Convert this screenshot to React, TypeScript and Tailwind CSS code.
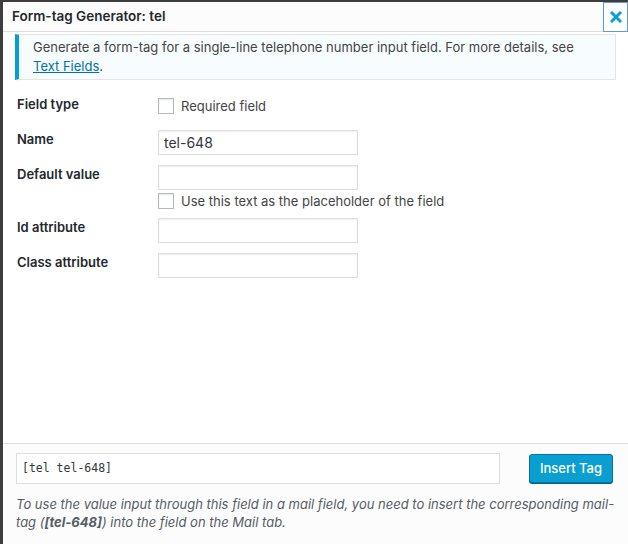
import { useState } from 'react'

function Checkbox({ label }: { label: string }) {
  return (
    <label className="flex items-center gap-[7px] h-4 text-[13px] text-[#444]">
      <span className="w-4 h-4 border border-[#b4b9be] bg-white shadow-[inset_0_1px_2px_rgba(0,0,0,0.1)]" />
      {label}
    </label>
  )
}

function Field({ value = '' }: { value?: string }) {
  return (
    <div className="w-[200px] h-[25px] border border-[#ddd] bg-white shadow-[inset_0_1px_2px_rgba(0,0,0,0.07)] px-[5px] flex items-center text-[14px] text-[#32373c]">
      {value}
    </div>
  )
}

export default function App() {
  const [tag] = useState('[tel tel-648]')

  return (
    <div className="w-[628px] h-[544px] bg-[#3d3d3d] pl-[3px] pt-[2px] overflow-hidden" style={{ fontFamily: 'Inter, "Noto Sans", sans-serif' }}>
      <div className="h-full bg-white flex flex-col">
        {/* header */}
        <div className="h-[30px] bg-[#fcfcfc] border-b border-[#ddd] flex items-center justify-between shrink-0">
          <h1 className="pl-[9px] text-[13.5px] font-semibold text-[#23282d]">Form-tag Generator: tel</h1>
          <button className="w-[25px] h-[30px] border border-[#5b9dd9] bg-white flex items-center justify-center text-[#0aa0d6]">
            <svg width="12" height="12" viewBox="0 0 12 12">
              <path d="M2 2 L10 10 M10 2 L2 10" stroke="currentColor" strokeWidth="3" strokeLinecap="square" />
            </svg>
          </button>
        </div>

        <div className="flex-1 px-[12px]">
          <div className="mt-[2px] bg-[#f7fcfe] border border-[#e5e5e5] border-l-4 border-l-[#00a0d2] pl-[14px] pr-[12px] py-[3px] text-[13px] leading-[19px] text-[#444]">
            Generate a form-tag for a single-line telephone number input field. For more details, see{' '}
            <a className="text-[#0073aa] underline">Text Fields</a>.
          </div>

          <div className="pl-[2px] pt-[18px] grid grid-cols-[141px_1fr] text-[13px] leading-[19px] text-[#23282d]">
            <div className="font-semibold -mt-[3px]">Field type</div>
            <div className="pb-[16px]"><Checkbox label="Required field" /></div>

            <div className="font-semibold">Name</div>
            <div className="pb-[10px]"><Field value="tel-648" /></div>

            <div className="font-semibold">Default value</div>
            <div className="pb-[9px]">
              <Field />
              <div className="mt-[3px]"><Checkbox label="Use this text as the placeholder of the field" /></div>
            </div>

            <div className="font-semibold">Id attribute</div>
            <div className="pb-[10px]"><Field /></div>

            <div className="font-semibold">Class attribute</div>
            <div><Field /></div>
          </div>
        </div>

        {/* footer */}
        <div className="h-[101px] shrink-0 bg-[#fcfcfc] border-t border-[#ddd] pl-[13px] pr-[15px] pt-[9px]">
          <div className="flex items-center justify-between">
            <div className="w-[484px] h-[31px] border border-[#ddd] bg-white flex items-center px-[5px] text-[11.5px] text-[#32373c]" style={{ fontFamily: '"DejaVu Sans Mono", monospace' }}>
              {tag}
            </div>
            <button className="h-[29px] w-[84px] rounded-[3px] bg-[#0a9fd0] border border-[#0073aa] shadow-[0_1px_0_#006799] text-white text-[13px] font-medium">
              Insert Tag
            </button>
          </div>
          <p className="mt-[11px] -mr-[10px] italic text-[13px] leading-[18px] text-[#555d66]">
            To use the value input through this field in a mail field, you need to insert the corresponding mail-tag (<strong>[tel-648]</strong>) into the field on the Mail tab.
          </p>
        </div>
      </div>
    </div>
  )
}
